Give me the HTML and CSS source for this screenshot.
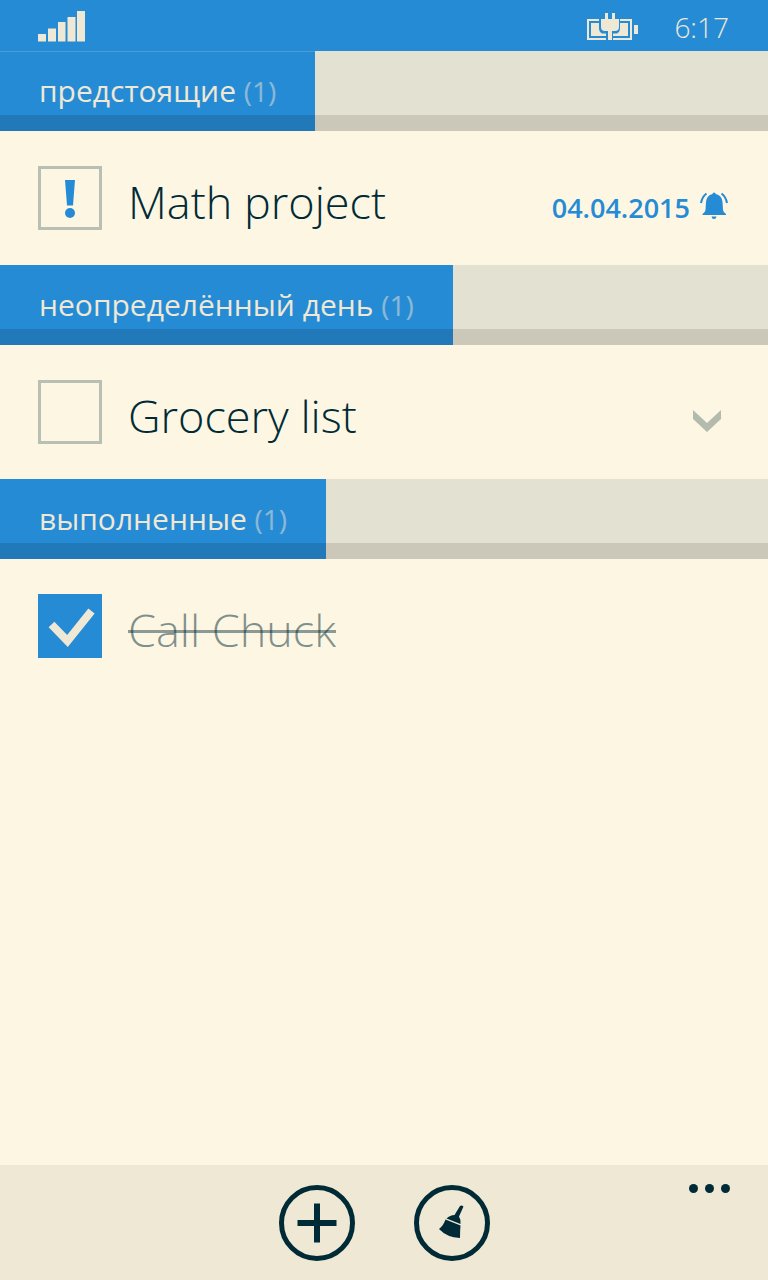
FILE: index.html
```html
<!DOCTYPE html>
<html lang="ru">
<head>
<meta charset="utf-8">
<meta name="viewport" content="width=device-width, initial-scale=1">
<title>Задачи</title>
<link rel="stylesheet" href="styles.css">
</head>
<body>
<div class="app">
  <header class="status">
    <svg class="signal" width="47" height="31" viewBox="0 0 47 31" role="img" aria-label="Сигнал">
      <path d="M0 23h8v7.500H0zM10 17.500h8v13h-8zM20 11h7.500v19.500H20zM29.500 6h8v24.500h-8zM39 0h8v30.500h-8z"/>
    </svg>
    <div class="status-right">
      <svg class="battery" width="51" height="28" viewBox="0 0 51 28" role="img" aria-label="Зарядка">
        <path d="M0 6h12v2H2v17h17v2H0zM33 6h12v21H26v-2h17V8H33z"/>
        <path d="M4 10h8v5q0 4 3 5.500h4V23H4zM41 10h-8v5q0 4-3 5.500h-4V23h15zM47 12h4v9h-4z"/>
        <path d="M18 0h3v6h4V0h3v6h4v8q0 4-4 4h-3v9h-4v-9h-3q-4 0-4-4V6h4z"/>
      </svg>
      <time class="clock">6:17</time>
    </div>
  </header>

  <main class="list">
    <section>
      <div class="bar"><h2 class="tab first">предстоящие <span class="count">(1)</span></h2></div>
      <div class="task">
        <span class="check">
          <input class="box" type="checkbox" id="math">
          <svg class="mark alert" width="64" height="64" viewBox="0 0 64 64" aria-hidden="true">
            <path d="M27 14h10l-2 25.500h-6z"/><circle cx="32" cy="47" r="5"/>
          </svg>
        </span>
        <label class="title" for="math">Math project</label>
        <span class="due">
          <time datetime="2015-04-04">04.04.2015</time>
          <svg class="bell" width="28" height="28" viewBox="0 0 28 28" aria-hidden="true">
            <path d="M12.500 2a1.600 1.600 0 0 1 3.200 0q6.300 1.500 6.800 8l.5 8q.3 2.500 3 4v1H2.500v-1q2.700-1.500 3-4l.5-8q.5-6.500 6.500-8zM11.500 24.500h5q-.3 2.500-2.500 2.500t-2.500-2.500z"/>
            <path class="ring" d="M6.500 1.500Q2 5 1 11M21.500 1.500Q26 5 27 11"/>
          </svg>
        </span>
      </div>
    </section>

    <section>
      <div class="bar"><h2 class="tab">неопределённый день <span class="count">(1)</span></h2></div>
      <div class="task">
        <span class="check"><input class="box" type="checkbox" id="grocery"></span>
        <label class="title" for="grocery">Grocery list</label>
        <button class="expand" type="button" aria-label="Развернуть">
          <svg width="28" height="22" viewBox="0 0 28 22"><path d="M0 0l14 13L28 0v9L14 22 0 9z"/></svg>
        </button>
      </div>
    </section>

    <section>
      <div class="bar"><h2 class="tab">выполненные <span class="count">(1)</span></h2></div>
      <div class="task">
        <span class="check">
          <input class="box" type="checkbox" id="chuck" checked>
          <svg class="mark tick" width="64" height="64" viewBox="0 0 64 64" aria-hidden="true">
            <path d="M13.500 30.500L29.500 47 53.500 17"/>
          </svg>
        </span>
        <label class="title done" for="chuck">Call Chuck</label>
      </div>
    </section>
  </main>

  <footer class="appbar">
    <button class="round" type="button" aria-label="Добавить">
      <svg width="40" height="40" viewBox="0 0 40 40"><path d="M17 0.500h6v16.500h16.500v6H23v16.500h-6V23H0.500v-6H17z"/></svg>
    </button>
    <button class="round" type="button" aria-label="Очистить">
      <svg width="40" height="40" viewBox="0 0 40 40">
        <path d="M28 3q1.500-1 3.500.5l-4.500 10q1.800 2.500 1.500 7.500L14.500 15.500q3.500-3.500 8-3.500z"/>
        <path d="M13.500 16.500l15 6q-.5 5-.5 12.500Q15 34.500 7 26 11.500 22.500 13.500 16.500z"/>
      </svg>
    </button>
    <button class="more" type="button" aria-label="Ещё">
      <svg width="41" height="10" viewBox="0 0 41 10"><circle cx="4.500" cy="4.500" r="4.500"/><circle cx="20.500" cy="4.500" r="4.500"/><circle cx="36.500" cy="4.500" r="4.500"/></svg>
    </button>
  </footer>
</div>
</body>
</html>
```
FILE: styles.css
```css
:root {
  --blue: #268bd5;
  --paper: #fdf6e3;
  --sand: #eee8d5;
  --ink: #002b36;
}

* { box-sizing: border-box; }

body {
  margin: 0;
  background: var(--paper);
  color: var(--ink);
  font-family: "Open Sans", "Noto Sans", sans-serif;
}

button {
  padding: 0;
  border: 0;
  background: none;
  color: inherit;
  cursor: pointer;
}

svg { display: block; fill: currentColor; }

.app { display: flex; flex-direction: column; min-height: 100vh; }

.status {
  display: flex;
  align-items: center;
  justify-content: space-between;
  height: 51px;
  padding: 2px 39px 0 38px;
  background: var(--blue);
  color: var(--sand);
}

.status-right { display: flex; align-items: center; gap: 36px; }

.clock { font-size: 28px; font-weight: 300; line-height: 48px; }

.list { flex: 1; }

.bar {
  display: flex;
  height: 80px;
  background: linear-gradient(to top, #cbc8ba 16px, #e3e1d1 16px);
}

.tab {
  margin: 0;
  padding: 0 39px;
  background: linear-gradient(to top, #2279b9 16px, var(--blue) 16px);
  color: var(--sand);
  font-size: 30px;
  font-weight: 400;
  line-height: 80px;
  white-space: nowrap;
}

.first { box-shadow: inset 0 1px #4a9bd6; }

.count { font-size: 28px; opacity: 0.5; }

.task {
  display: flex;
  align-items: center;
  height: 134px;
  padding: 0 38px;
}

.check { position: relative; margin-right: 26px; }

.box {
  display: block;
  appearance: none;
  width: 64px;
  height: 64px;
  margin: 0;
  border: 3px solid #b8bfb3;
}

.box:checked { border: 0; background: var(--blue); }

.mark { position: absolute; inset: 0; pointer-events: none; }
.alert { color: var(--blue); }
.tick { fill: none; stroke: var(--sand); stroke-width: 8px; }

.title {
  flex: 1;
  padding-top: 8px;
  font-size: 45px;
  font-weight: 300;
  line-height: 64px;
}

.done {
  flex: none;
  color: rgba(0, 43, 54, 0.5);
  text-decoration: line-through 3px rgba(0, 43, 54, 0.45);
}

.due {
  display: flex;
  align-items: center;
  gap: 10px;
  padding: 19px 2px 0 0;
  color: var(--blue);
  font-size: 27px;
  font-weight: 600;
  line-height: 36px;
}

.bell { margin-bottom: 4px; }
.ring { fill: none; stroke: currentColor; stroke-width: 2px; }

.expand { margin: 18px 9px 0 0; color: #b3bbaf; }

.appbar {
  display: grid;
  grid-template-columns: 1fr auto auto 1fr;
  column-gap: 59px;
  align-items: center;
  height: 115px;
  padding: 0 38px;
  background: var(--sand);
}

.round {
  display: grid;
  place-items: center;
  width: 76px;
  height: 76px;
  border: 5px solid var(--ink);
  border-radius: 50%;
}

.round:first-child { grid-column: 2; }

.more { align-self: start; justify-self: end; padding-top: 19px; }
```
